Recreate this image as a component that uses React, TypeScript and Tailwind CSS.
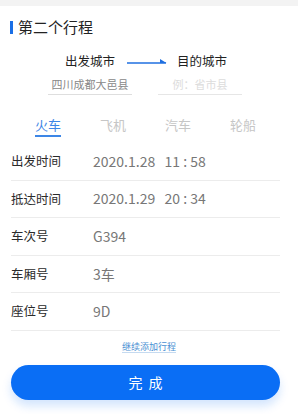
import React, { useState } from 'react';

const font = { fontFamily: '"Noto Sans CJK SC", "Noto Sans", sans-serif' };

const rows = [
  { label: '出发时间', value: '2020.1.28   11 : 58' },
  { label: '抵达时间', value: '2020.1.29   20 : 34' },
  { label: '车次号', value: 'G394' },
  { label: '车厢号', value: '3车' },
  { label: '座位号', value: '9D' },
];

const tabs = ['火车', '飞机', '汽车', '轮船'];

const App: React.FC = () => {
  const [active, setActive] = useState(0);

  return (
    <div className="w-[298px] h-[414px] bg-white flex flex-col overflow-hidden" style={font}>
      <div className="h-[6px] bg-[#f3f3f3]" />

      <div className="flex items-center h-[22px] mt-[10px] pl-[10px]">
        <div className="w-[3px] h-[13px] bg-[#1a6fe6] mr-[5px]" />
        <h2 className="text-[15px] leading-[22px] text-[#222]">第二个行程</h2>
      </div>

      <div className="flex items-center justify-center h-[24px] mt-[11px] pr-[4px]">
        <span className="text-[12.5px] text-[#222] w-[52px]">出发城市</span>
        <svg width="42" height="8" viewBox="0 0 42 8" className="mx-[9px]">
          <line x1="1" y1="6" x2="40" y2="6" stroke="#1f6fe0" strokeWidth="1.6" />
          <path d="M34 2 L40.5 6 L34 6 Z" fill="#1f6fe0" />
        </svg>
        <span className="text-[12.5px] text-[#222] w-[52px]">目的城市</span>
      </div>

      <div className="flex justify-between pl-[48px] pr-[56px] mt-[1px]">
        <div className="w-[84px] h-[21px] border-b border-[#dedede] flex items-center justify-center">
          <span className="text-[11px] text-[#888]">四川成都大邑县</span>
        </div>
        <div className="w-[84px] h-[21px] border-b border-[#e6e6e6] flex items-center justify-center">
          <span className="text-[11px] text-[#dcdcdc]">例：省市县</span>
        </div>
      </div>

      <nav className="flex h-[48px] pl-[35px] gap-[39px] pt-[20px]">
        {tabs.map((t, i) => (
          <button
            key={t}
            onClick={() => setActive(i)}
            className={`w-[26px] h-[22px] text-[13px] leading-[18px] border-b-2 ${i === active ? 'text-[#3d86e6] border-[#3d86e6]' : 'text-[#c6c6c6] border-transparent'}`}
          >
            {t}
          </button>
        ))}
      </nav>

      <div className="px-[11px] mr-[7px]">
        {rows.map(r => (
          <div key={r.label} className="flex items-center h-[37.6px] border-b border-[#ececec]">
            <span className="w-[82px] text-[12.5px] text-[#2a2a2a]">{r.label}</span>
            <span className="text-[14px] text-[#777] whitespace-pre">{r.value}</span>
          </div>
        ))}
      </div>

      <div className="flex justify-center mt-[10px]">
        <a className="text-[9px] leading-[12px] text-[#4a8fd3] underline underline-offset-2 decoration-[#c5daf0]">继续添加行程</a>
      </div>

      <div className="px-[11px] mr-[7px] mt-[12px]">
        <button className="w-full h-[35px] rounded-full bg-[#0a6ef5] text-white text-[14px] tracking-[6px] pl-[6px] shadow-[0_6px_10px_rgba(10,110,245,0.18)]">
          完成
        </button>
      </div>
    </div>
  );
};

export default App;
